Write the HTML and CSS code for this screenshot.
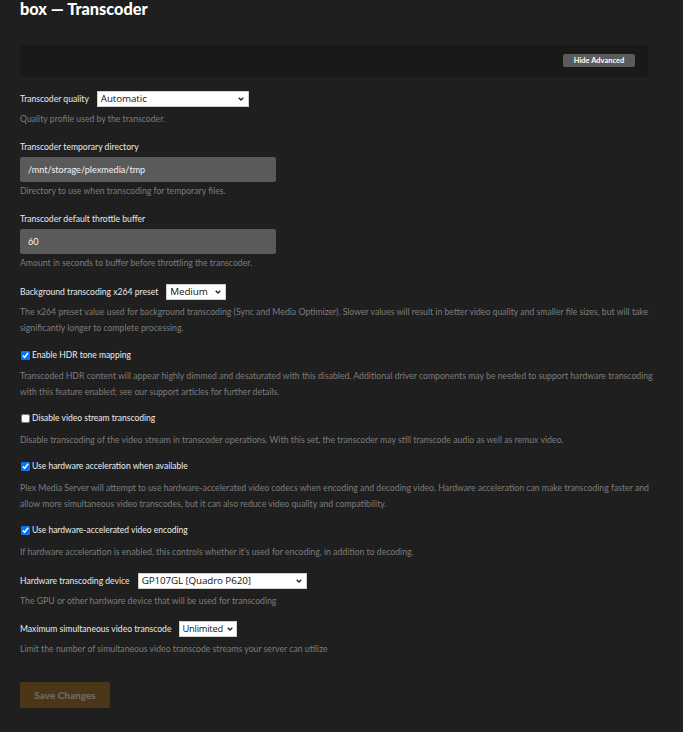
FILE: index.html
```html
<!DOCTYPE html>
<html lang="en">
<head>
<meta charset="utf-8">
<title>box — Transcoder</title>
<link rel="stylesheet" href="styles.css">
</head>
<body>
<div class="page">
  <h1 class="title">box — Transcoder</h1>

  <div class="toolbar">
    <button class="btn-advanced" type="button">Hide Advanced</button>
  </div>

  <div class="setting first">
    <div class="row">
      <label class="label">Transcoder quality</label>
      <span class="select w-quality"><span class="select-text">Automatic</span><svg class="chev" viewBox="0 0 6 4" width="6" height="4"><path d="M0.7 0.7 L3 3 L5.3 0.7" fill="none" stroke="#222" stroke-width="1.3"/></svg></span>
    </div>
    <p class="desc desc-select">Quality profile used by the transcoder.</p>
  </div>

  <div class="setting">
    <label class="label block">Transcoder temporary directory</label>
    <div class="input">/mnt/storage/plexmedia/tmp</div>
    <p class="desc desc-input">Directory to use when transcoding for temporary files.</p>
  </div>

  <div class="setting">
    <label class="label block">Transcoder default throttle buffer</label>
    <div class="input">60</div>
    <p class="desc desc-input">Amount in seconds to buffer before throttling the transcoder.</p>
  </div>

  <div class="setting">
    <div class="row">
      <label class="label">Background transcoding x264 preset</label>
      <span class="select w-medium"><span class="select-text">Medium</span><svg class="chev" viewBox="0 0 6 4" width="6" height="4"><path d="M0.7 0.7 L3 3 L5.3 0.7" fill="none" stroke="#222" stroke-width="1.3"/></svg></span>
    </div>
    <p class="desc desc-select">The x264 preset value used for background transcoding (Sync and Media Optimizer). Slower values will result in better video quality and smaller file sizes, but will take<br>significantly longer to complete processing.</p>
  </div>

  <div class="setting check-setting first-check">
    <label class="check"><input type="checkbox" checked><span>Enable HDR tone mapping</span></label>
    <p class="desc desc-check">Transcoded HDR content will appear highly dimmed and desaturated with this disabled. Additional driver components may be needed to support hardware transcoding<br>with this feature enabled; see our support articles for further details.</p>
  </div>

  <div class="setting check-setting">
    <label class="check"><input type="checkbox"><span>Disable video stream transcoding</span></label>
    <p class="desc desc-check">Disable transcoding of the video stream in transcoder operations. With this set, the transcoder may still transcode audio as well as remux video.</p>
  </div>

  <div class="setting check-setting">
    <label class="check"><input type="checkbox" checked><span>Use hardware acceleration when available</span></label>
    <p class="desc desc-check">Plex Media Server will attempt to use hardware-accelerated video codecs when encoding and decoding video. Hardware acceleration can make transcoding faster and<br>allow more simultaneous video transcodes, but it can also reduce video quality and compatibility.</p>
  </div>

  <div class="setting check-setting">
    <label class="check"><input type="checkbox" checked><span>Use hardware-accelerated video encoding</span></label>
    <p class="desc desc-check">If hardware acceleration is enabled, this controls whether it's used for encoding, in addition to decoding.</p>
  </div>

  <div class="setting">
    <div class="row">
      <label class="label">Hardware transcoding device</label>
      <span class="select w-device"><span class="select-text">GP107GL [Quadro P620]</span><svg class="chev" viewBox="0 0 6 4" width="6" height="4"><path d="M0.7 0.7 L3 3 L5.3 0.7" fill="none" stroke="#222" stroke-width="1.3"/></svg></span>
    </div>
    <p class="desc desc-select">The GPU or other hardware device that will be used for transcoding</p>
  </div>

  <div class="setting last">
    <div class="row">
      <label class="label">Maximum simultaneous video transcode</label>
      <span class="select w-unlimited"><span class="select-text">Unlimited</span><svg class="chev" viewBox="0 0 6 4" width="6" height="4"><path d="M0.7 0.7 L3 3 L5.3 0.7" fill="none" stroke="#222" stroke-width="1.3"/></svg></span>
    </div>
    <p class="desc desc-select">Limit the number of simultaneous video transcode streams your server can utilize</p>
  </div>

  <button class="btn-save" type="button">Save Changes</button>
</div>
</body>
</html>
```

FILE: styles.css
```css
html, body {
  margin: 0;
  padding: 0;
  background: #1f1f1f;
}

body {
  font-family: Lato, "Noto Sans", "Liberation Sans", sans-serif;
  color: #e6e6e6;
}

.page {
  width: 660px;
  padding: 0 0 24px 20px;
}

.title {
  margin: 0;
  font-family: Lato, "Open Sans", sans-serif;
  font-weight: 900;
  font-size: 16.3px;
  line-height: 17px;
  color: #ffffff;
}

.toolbar {
  margin-top: 28px;
  width: 628px;
  box-sizing: border-box;
  height: 32px;
  background: #191919;
  display: flex;
  align-items: center;
  justify-content: flex-end;
  padding-right: 13px;
}

.btn-advanced {
  height: 13px;
  width: 72px;
  padding: 0;
  border: 0;
  border-radius: 2px;
  background: #5b5b5b;
  color: #ffffff;
  font-family: Lato, sans-serif;
  font-weight: 700;
  font-size: 7.5px;
  line-height: 13px;
  margin-top: -1px;
}

.setting {
  margin-top: 13px;
}

.setting.first {
  margin-top: 14px;
}

.setting.last {
  margin-top: 12px;
}

.check-setting {
  margin-top: 11px;
}

.check-setting.first-check {
  margin-top: 12px;
}

.row {
  display: flex;
  align-items: center;
  height: 16px;
  gap: 8px;
}

.label {
  font-size: 8.6px;
  line-height: 14px;
  color: #eaeaea;
}

.label.block {
  display: block;
}

.select {
  position: relative;
  display: inline-flex;
  align-items: center;
  height: 16px;
  box-sizing: border-box;
  background: #ffffff;
  border: 1px solid #cfcfcf;
  padding-left: 3px;
  color: #111;
}

.select-text {
  font-family: "Open Sans", "Noto Sans", sans-serif;
  font-size: 9.8px;
  line-height: 14px;
  letter-spacing: -0.1px;
  white-space: nowrap;
}

.chev {
  position: absolute;
  right: 4px;
  top: 5px;
}

.w-quality { width: 152px; }
.w-medium { width: 60px; }
.w-device { width: 169px; }
.w-unlimited { width: 58px; padding-left: 2px; }
.w-unlimited .select-text { font-size: 9.3px; letter-spacing: -0.2px; }
.w-unlimited .chev { right: 3px; }

.input {
  margin-top: 3px;
  width: 256px;
  height: 25px;
  box-sizing: border-box;
  background: #5a5a5a;
  border-radius: 2px;
  padding-left: 8px;
  font-size: 9.1px;
  line-height: 25px;
  color: #f2f2f2;
}

.desc {
  margin: 0;
  font-size: 8.7px;
  line-height: 16px;
  color: #7d7d7d;
}

.desc-select { margin-top: 4px; }
.desc-input { margin-top: 1px; }
.desc-check { margin-top: 7px; }

.check {
  display: flex;
  align-items: center;
  height: 14px;
  font-size: 8.5px;
  color: #eeeeee;
}

.check input {
  width: 9px;
  height: 9px;
  margin: 0 2px 0 1px;
}

.first-check .desc-check { margin-top: 6px; }

.btn-save {
  display: block;
  margin-top: 25px;
  width: 90px;
  height: 26px;
  padding: 0;
  border: 0;
  border-radius: 2px;
  background: #4c3618;
  color: #6e6a64;
  font-family: Lato, "Open Sans", sans-serif;
  font-weight: 900;
  font-size: 10px;
}
```
